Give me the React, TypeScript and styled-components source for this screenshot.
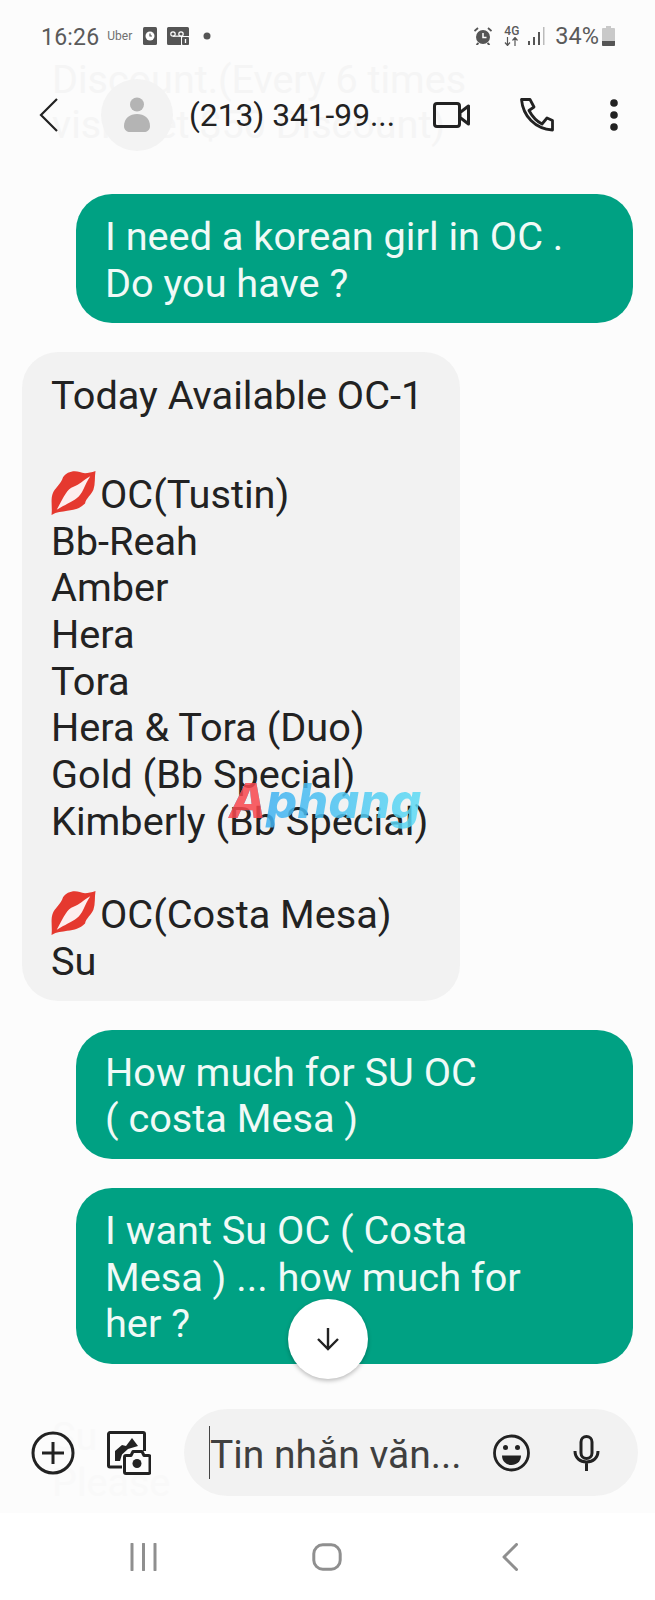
import React from 'react';
import styled, { createGlobalStyle } from 'styled-components';

const GlobalStyle = createGlobalStyle`
	html, body {
		margin: 0;
		padding: 0;
		background: #fcfcfc;
		overflow: hidden;
	}
	* {
		box-sizing: border-box;
	}
`;

const Phone = styled.div`
	position: relative;
	display: flex;
	flex-direction: column;
	width: 655px;
	height: 1600px;
	overflow: hidden;
	background: #fcfcfc;
	font-family: Roboto, 'Noto Sans', sans-serif;
`;

const StatusBar = styled.div`
	display: flex;
	align-items: center;
	justify-content: space-between;
	height: 72px;
	padding: 0 40px 0 41px;
	color: #5a5a5a;
`;

const StatusGroup = styled.div`
	display: flex;
	align-items: center;
`;

const Clock = styled.span`
	padding-top: 2px;
	font-size: 23px;
	letter-spacing: 0.2px;
	margin-right: 8px;
`;

const UberLabel = styled.span`
	font-size: 12px;
	color: #707070;
	margin-right: 11px;
`;

const NetworkLabel = styled.span`
	display: flex;
	flex-direction: column;
	align-items: center;
	font-size: 12px;
	font-weight: 500;
	line-height: 11px;
	margin: 0 9px 0 12px;
`;

const BatteryText = styled.span`
	font-size: 23.5px;
	margin-left: 10px;
`;

const Header = styled.div`
	position: relative;
	display: flex;
	align-items: center;
	height: 86px;
	padding-left: 39px;
`;

const GhostLine = styled.div<{ $top: number; $faint?: boolean }>`
	position: absolute;
	top: ${(p) => p.$top}px;
	left: 52px;
	font-size: 39.5px;
	line-height: 46px;
	color: ${(p) => (p.$faint ? '#f9f9f9' : '#f5f5f5')};
	white-space: nowrap;
`;

const Avatar = styled.div`
	position: relative;
	display: flex;
	align-items: center;
	justify-content: center;
	width: 72px;
	height: 72px;
	border-radius: 50%;
	background: #f3f3f3;
	margin-left: 43px;
`;

const Title = styled.div`
	position: relative;
	width: 243px;
	margin-left: 16px;
	font-size: 31.7px;
	color: #222;
	white-space: nowrap;
`;

const Action = styled.div<{ $width: number; $gap?: number }>`
	position: relative;
	display: flex;
	justify-content: center;
	width: ${(p) => p.$width}px;
	margin-left: ${(p) => p.$gap ?? 0}px;
`;

const Thread = styled.div`
	flex: 1;
	display: flex;
	flex-direction: column;
	gap: 29px;
	padding: 36px 22px 0;
`;

const Bubble = styled.div<{ $mine?: boolean }>`
	align-self: ${(p) => (p.$mine ? 'flex-end' : 'flex-start')};
	width: ${(p) => (p.$mine ? 557 : 438)}px;
	padding: ${(p) => (p.$mine ? '20px 29px 16px' : '21px 29px 15px')};
	border-radius: 36px;
	background: ${(p) => (p.$mine ? '#00a183' : '#f2f2f2')};
	color: ${(p) => (p.$mine ? '#f0faf7' : '#222')};
	font-size: 39.7px;
	line-height: 46.7px;
	white-space: pre;
`;

const BubbleBlock = styled.div`
	margin-top: 5px;
`;

const LipsSvg = styled.svg`
	display: inline-block;
	width: 45px;
	height: 44px;
	margin: -13px 4px -13px 0;
	vertical-align: 6px;
`;

const Watermark = styled.div`
	position: absolute;
	left: 229px;
	top: 771px;
	font-family: Inter, Roboto, sans-serif;
	font-size: 48px;
	font-weight: 800;
	font-style: italic;
	line-height: 60px;
	letter-spacing: 0.5px;
	background: linear-gradient(90deg, #3aa8f0 0%, #5fdcf5 100%);
	-webkit-background-clip: text;
	background-clip: text;
	color: transparent;
	opacity: 0.85;
`;

const WatermarkInitial = styled.span`
	color: #f8474e;
`;

const ScrollButton = styled.div`
	position: absolute;
	left: 288px;
	top: 1299px;
	display: flex;
	align-items: center;
	justify-content: center;
	width: 80px;
	height: 80px;
	border-radius: 50%;
	background: #fff;
	box-shadow: 0 2px 4px rgba(0, 0, 0, 0.25);
`;

const Composer = styled.div`
	position: relative;
	display: flex;
	align-items: center;
	height: 121px;
	padding: 0 17px 0 31px;
`;

const AttachButton = styled.div`
	position: relative;
	display: flex;
	margin-right: 32px;
`;

const InputPill = styled.div`
	position: relative;
	display: flex;
	align-items: center;
	flex: 1;
	height: 87px;
	margin-left: 1px;
	padding: 0 38px 0 25px;
	border-radius: 44px;
	background: #f2f2f2;
`;

const Caret = styled.div`
	width: 1px;
	height: 53px;
	background: #444;
`;

const Placeholder = styled.div`
	flex: 1;
	padding-top: 5px;
	font-size: 39px;
	color: #3f3f3f;
	white-space: nowrap;
`;

const NavBar = styled.div`
	display: grid;
	grid-template-columns: repeat(3, 1fr);
	align-items: center;
	justify-items: center;
	height: 87px;
	background: #fff;
`;

const Icon = styled.svg<{ $left?: number; $right?: number }>`
	display: block;
	position: relative;
	flex-shrink: 0;
	margin-left: ${(p) => p.$left ?? 0}px;
	margin-right: ${(p) => p.$right ?? 0}px;
`;

function Lips() {
	return (
		<LipsSvg viewBox="0 0 42 42">
			<path
				d="M42 0C36 2 31 3 27 1 21-1 14 1 11 6 9 13 3 16 1 22c-2 6 0 13-1 20 5-3 10-3 15-4 7-1 12-2 17-7 1-5 6-8 8-13 2-6 1-12 2-18z"
				fill="#e5392f"
			/>
			<path d="M37 5C30 9 27 13 21 15 15 17 12 24 5 37 13 32 19 30 24 26 30 22 31 14 37 5z" fill="#fdeeee" />
		</LipsSvg>
	);
}

export default function App() {
	return (
		<Phone>
			<GlobalStyle />
			<StatusBar>
				<StatusGroup>
					<Clock>16:26</Clock>
					<UberLabel>Uber</UberLabel>
					<Icon width="14" height="18" viewBox="0 0 14 18">
						<rect width="14" height="18" rx="1.5" fill="#555" />
						<circle cx="7" cy="9" r="4.500" fill="#fff" />
						<path d="M7 6.500V9h2" stroke="#555" strokeWidth="1.2" fill="none" />
					</Icon>
					<Icon width="22" height="18" viewBox="0 0 22 18" $left={10}>
						<path d="M1.500 0h19A1.500 1.500 0 0 1 22 1.500V9h-8v9H1.500A1.500 1.500 0 0 1 0 16.500v-15A1.500 1.500 0 0 1 1.500 0z" fill="#555" />
						<circle cx="6" cy="7" r="2.200" stroke="#fff" strokeWidth="1.2" fill="none" />
						<circle cx="14" cy="7" r="2.200" stroke="#fff" strokeWidth="1.2" fill="none" />
						<path d="M6 9.200h8" stroke="#fff" strokeWidth="1.2" />
						<rect x="15" y="10" width="7" height="8" rx="1" fill="#555" />
						<path d="M18.500 12v4" stroke="#fff" strokeWidth="1.3" />
					</Icon>
					<Icon width="8" height="8" viewBox="0 0 8 8" $left={14}>
						<circle cx="4" cy="4" r="3.500" fill="#555" />
					</Icon>
				</StatusGroup>
				<StatusGroup>
					<Icon width="18" height="18" viewBox="0 0 18 18">
						<circle cx="9" cy="10" r="7" fill="#555" />
						<path d="M9 6v4.500h3.500" stroke="#fff" strokeWidth="1.500" fill="none" />
						<path d="M.5 4 4 1M17.500 4 14 1M4.500 16l-2 2M13.500 16l2 2" stroke="#555" strokeWidth="1.800" />
					</Icon>
					<NetworkLabel>
						4G
						<Icon width="15" height="9" viewBox="0 0 15 9">
							<path d="M3.500 0v8M1 5.500l2.500 3 2.500-3M11 9V1M8.500 3.500l2.500-3 2.500 3" stroke="#555" strokeWidth="1.200" fill="none" />
						</Icon>
					</NetworkLabel>
					<Icon width="17" height="19" viewBox="0 0 17 19">
						<rect x="0" y="14" width="2" height="4" fill="#555" />
						<rect x="5" y="10" width="2" height="8" fill="#555" />
						<rect x="10" y="5" width="2" height="13" fill="#555" />
						<rect x="15" y="0" width="1.500" height="18" fill="#bbb" />
					</Icon>
					<BatteryText>34%</BatteryText>
					<Icon width="13" height="20" viewBox="0 0 13 20" $left={3}>
						<path d="M4 0h5v2h3a1 1 0 0 1 1 1v16a1 1 0 0 1-1 1H1a1 1 0 0 1-1-1V3a1 1 0 0 1 1-1h3z" fill="#c9c9c9" />
						<path d="M0 15h13v4a1 1 0 0 1-1 1H1a1 1 0 0 1-1-1z" fill="#555" />
					</Icon>
				</StatusGroup>
			</StatusBar>

			<Header>
				<GhostLine $top={-15}>Discount.(Every 6 times</GhostLine>
				<GhostLine $top={30}>visit get $50 Discount)</GhostLine>
				<Icon width="19" height="34" viewBox="0 0 19 34">
					<path d="M18 1 2 17l16 16" stroke="#222" strokeWidth="2.200" fill="none" />
				</Icon>
				<Avatar>
					<Icon width="26" height="36" viewBox="0 0 26 36">
						<circle cx="13" cy="7.500" r="7" fill="#b4b4b4" />
						<path d="M0 29c0-8 6-12 13-12s13 4 13 12c0 4-3 6-6 6H6c-3 0-6-2-6-6z" fill="#b4b4b4" />
					</Icon>
				</Avatar>
				<Title>(213) 341-99...</Title>
				<Action $width={38}>
					<Icon width="37" height="26" viewBox="0 0 37 26">
						<rect x="1.500" y="1.500" width="25" height="23" rx="2.500" stroke="#222" strokeWidth="3" fill="none" />
						<path d="M27 10.500 35.500 4v18L27 15.500z" stroke="#222" strokeWidth="3" fill="none" strokeLinejoin="round" />
					</Icon>
				</Action>
				<Action $width={34} $gap={50}>
					<Icon width="34" height="34" viewBox="0 0 34 34">
						<path
							d="M1.500 1.500H10L14 9 9 12.500C12 18 16 23 22 26L27 20l5.500 2.500V32C15 31 3 18 1.500 1.500z"
							stroke="#222"
							strokeWidth="2.800"
							strokeLinejoin="round"
							fill="none"
						/>
					</Icon>
				</Action>
				<Action $width={10} $gap={55}>
					<Icon width="10" height="32" viewBox="0 0 10 32">
						<circle cx="5" cy="4" r="3.800" fill="#222" />
						<circle cx="5" cy="16" r="3.800" fill="#222" />
						<circle cx="5" cy="28" r="3.800" fill="#222" />
					</Icon>
				</Action>
			</Header>

			<Thread>
				<Bubble $mine>{'I need a korean girl in OC .\nDo you have ?'}</Bubble>
				<Bubble>
					{'Today Available OC-1\n\n'}
					<BubbleBlock>
						<Lips />
						{'OC(Tustin)\nBb-Reah\nAmber\nHera\nTora\nHera & Tora (Duo)\nGold (Bb Special)\nKimberly (Bb Special)\n\n'}
						<Lips />
						{'OC(Costa Mesa)\nSu'}
					</BubbleBlock>
				</Bubble>
				<Bubble $mine>{'How much for SU OC\n( costa Mesa )'}</Bubble>
				<Bubble $mine>{'I want Su OC ( Costa\nMesa ) ... how much for\nher ?'}</Bubble>
			</Thread>

			<Watermark>
				<WatermarkInitial>A</WatermarkInitial>phang
			</Watermark>

			<ScrollButton>
				<Icon width="24" height="24" viewBox="0 0 24 24">
					<path d="M12 1v21M2 12l10 10 10-10" stroke="#222" strokeWidth="2.400" fill="none" />
				</Icon>
			</ScrollButton>

			<Composer>
				<GhostLine $top={22} $faint>Su</GhostLine>
				<GhostLine $top={68} $faint>Please</GhostLine>
				<AttachButton>
					<Icon width="44" height="44" viewBox="0 0 44 44">
						<circle cx="22" cy="22" r="20" stroke="#222" strokeWidth="3" fill="none" />
						<path d="M22 11v22M11 22h22" stroke="#222" strokeWidth="3" />
					</Icon>
				</AttachButton>
				<AttachButton>
					<Icon width="44" height="44" viewBox="0 0 44 44">
						<path d="M15 36H3A1.500 1.500 0 0 1 1.500 34.500V3A1.500 1.500 0 0 1 3 1.500h33A1.500 1.500 0 0 1 37.500 3v17" stroke="#222" strokeWidth="3" fill="none" />
						<path d="M8 30V20l7-6 4 1 6-8 6 8-10 3-6 5.500L13 30z" fill="#222" />
						<path d="M19 42.500a1.500 1.500 0 0 1-1.500-1.500V26a1.500 1.500 0 0 1 1.500-1.500h5l2-4h9l2 4h4.500A1.500 1.500 0 0 1 43 26v15a1.500 1.500 0 0 1-1.500 1.500z" stroke="#222" strokeWidth="3" fill="#fcfcfc" strokeLinejoin="round" />
						<circle cx="30" cy="32.500" r="4.500" fill="#222" />
					</Icon>
				</AttachButton>
				<InputPill>
					<Caret />
					<Placeholder>Tin nhắn văn...</Placeholder>
					<Icon width="37" height="38" viewBox="0 0 37 38">
						<circle cx="18.500" cy="19" r="17" stroke="#222" strokeWidth="2.800" fill="none" />
						<circle cx="12.500" cy="13.500" r="2.500" fill="#222" />
						<circle cx="24.500" cy="13.500" r="2.500" fill="#222" />
						<path d="M9 21.500h19c0 6-4.500 9.500-9.500 9.500S9 27.500 9 21.500z" fill="#222" />
					</Icon>
					<Icon width="27" height="36" viewBox="0 0 27 36" $left={43}>
						<rect x="8" y="1.500" width="11" height="22" rx="5.500" stroke="#222" strokeWidth="3" fill="none" />
						<path d="M2 16c0 7 5 11 11.500 11S25 23 25 16M13.500 27v9" stroke="#222" strokeWidth="3" fill="none" />
					</Icon>
				</InputPill>
			</Composer>

			<NavBar>
				<Icon width="27" height="28" viewBox="0 0 27 28" $left={68}>
					<path d="M2 1v26M13.500 1v26M25 1v26" stroke="#8f8f8f" strokeWidth="3" strokeLinecap="round" />
				</Icon>
				<Icon width="30" height="28" viewBox="0 0 30 28">
					<rect x="1.800" y="1.800" width="26.400" height="24.400" rx="9" stroke="#8f8f8f" strokeWidth="3" fill="none" />
				</Icon>
				<Icon width="16" height="28" viewBox="0 0 16 28" $right={71}>
					<path d="M14.500 1.500 2 14l12.500 12.500" stroke="#8f8f8f" strokeWidth="3" fill="none" strokeLinecap="round" strokeLinejoin="round" />
				</Icon>
			</NavBar>
		</Phone>
	);
}
